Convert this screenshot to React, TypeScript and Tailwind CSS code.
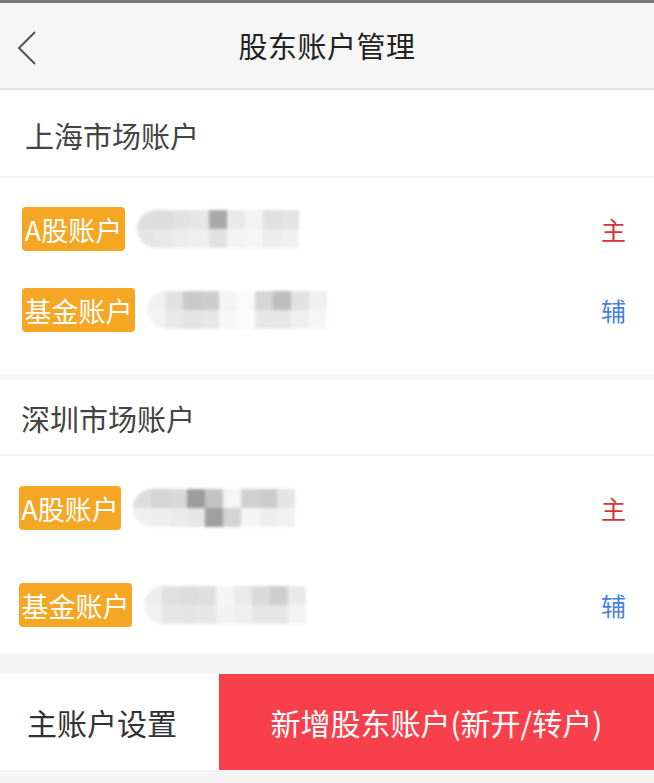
import React from "react";

const font = { fontFamily: '"Noto Sans CJK SC", "Noto Sans", sans-serif' };

type Cells = string[][];

function Mosaic({ cells, cw, ch }: { cells: Cells; cw: number; ch: number }) {
  return (
    <div className="flex flex-col blur-[1.5px] rounded-l-full overflow-hidden">
      {cells.map((row, i) => (
        <div key={i} className="flex">
          {row.map((c, j) => (
            <div key={j} style={{ width: cw, height: ch, background: c }} />
          ))}
        </div>
      ))}
    </div>
  );
}

function Badge({ text, w }: { text: string; w: string }) {
  return (
    <div
      className={`h-[44px] ${w} bg-[#f5a623] rounded-[4px] flex items-center justify-center text-white text-[27px] leading-none shrink-0`}
    >
      {text}
    </div>
  );
}

function Row({
  badge,
  bw,
  cells,
  tag,
  tagColor,
  shift,
}: {
  badge: string;
  bw: string;
  cells: Cells;
  tag: string;
  tagColor: string;
  shift: string;
}) {
  return (
    <div className={`flex items-center h-[44px] ${shift}`}>
      <Badge text={badge} w={bw} />
      <div className="ml-[12px]">
        <Mosaic cells={cells} cw={18} ch={19} />
      </div>
      <div className={`ml-auto mr-[28px] text-[25px] leading-none ${tagColor}`}>{tag}</div>
    </div>
  );
}

const m1: Cells = [
  ["#dedede", "#dcdcdc", "#e2e2e2", "#e6e6e6", "#a9a9a9", "#e9e9e9", "#f3f3f3", "#e0e0e0", "#e3e3e3"],
  ["#e4e4e4", "#e8e8e8", "#ececec", "#efefef", "#e2e2e2", "#f4f4f4", "#f6f6f6", "#ededed", "#f0f0f0"],
];
const m2: Cells = [
  ["#f1f1f1", "#e2e2e2", "#c9c9c9", "#cdcdcd", "#f4f4f4", "#fafafa", "#d6d6d6", "#bdbdbd", "#e2e2e2", "#f0f0f0"],
  ["#f3f3f3", "#e9e9e9", "#e3e3e3", "#e6e6e6", "#f7f7f7", "#fbfbfb", "#e7e7e7", "#e6e6e6", "#efefef", "#f6f6f6"],
];
const m3: Cells = [
  ["#dddddd", "#d5d5d5", "#d8d8d8", "#9c9c9c", "#c2c2c2", "#f5f5f5", "#d0d0d0", "#cccccc", "#e4e4e4"],
  ["#efefef", "#eeeeee", "#ebebeb", "#e7e7e7", "#9f9f9f", "#d3d3d3", "#f5f5f5", "#eeeeee", "#f2f2f2"],
];
const m4: Cells = [
  ["#eeeeee", "#e0e0e0", "#dcdcdc", "#dfdfdf", "#f5f5f5", "#eaeaea", "#dadada", "#cfcfcf", "#e9e9e9"],
  ["#f2f2f2", "#e5e5e5", "#e4e4e4", "#e6e6e6", "#f2f2f2", "#efefef", "#e5e5e5", "#e5e5e5", "#f3f3f3"],
];

export default function App() {
  return (
    <div className="w-[654px] h-[783px] bg-[#f5f5f5] flex flex-col overflow-hidden" style={font}>
      <div className="h-[3px] bg-[#7a7a7a]" />
      <div className="h-[87px] bg-[#f6f6f6] border-b-[2px] border-[#e3e3e3] relative flex items-center justify-center">
        <svg
          className="absolute left-[16px] top-[27px]"
          width="22"
          height="36"
          viewBox="0 0 22 36"
          fill="none"
        >
          <path d="M19 2 L3 18 L19 34" stroke="#555" strokeWidth="2" strokeLinejoin="miter" />
        </svg>
        <div className="text-[29px] text-[#222] leading-none tracking-[0.5px]">股东账户管理</div>
      </div>
      <div className="h-[1px] bg-white" />

      <div className="bg-white h-[87px] pt-[3px] flex items-center pl-[25px] border-b-[2px] border-[#f0f0f0]">
        <div className="text-[29px] text-[#444] leading-none">上海市场账户</div>
      </div>
      <div className="bg-white pt-[29px] pb-[42px] flex flex-col gap-[37px]">
        <Row badge="A股账户" bw="w-[103px]" cells={m1} tag="主" tagColor="text-[#d5323a]" shift="pl-[22px]" />
        <Row badge="基金账户" bw="w-[113px]" cells={m2} tag="辅" tagColor="text-[#4a80e0]" shift="pl-[22px]" />
      </div>

      <div className="h-[6px]" />

      <div className="bg-white h-[76px] pt-[3px] flex items-center pl-[21px] border-b-[2px] border-[#f0f0f0]">
        <div className="text-[29px] text-[#444] leading-none">深圳市场账户</div>
      </div>
      <div className="bg-white pt-[30px] pb-[26px] flex flex-col gap-[53px]">
        <Row badge="A股账户" bw="w-[102px]" cells={m3} tag="主" tagColor="text-[#d5323a]" shift="pl-[19px]" />
        <Row badge="基金账户" bw="w-[113px]" cells={m4} tag="辅" tagColor="text-[#4a80e0]" shift="pl-[19px]" />
      </div>

      <div className="h-[21px]" />

      <div className="h-[96px] flex">
        <div className="w-[219px] bg-white flex items-center pl-[27px] text-[30px] text-[#333] leading-none">
          主账户设置
        </div>
        <div className="flex-1 bg-[#f8404c] flex items-center justify-center text-[30px] text-white leading-none">
          新增股东账户(新开/转户)
        </div>
      </div>
    </div>
  );
}
